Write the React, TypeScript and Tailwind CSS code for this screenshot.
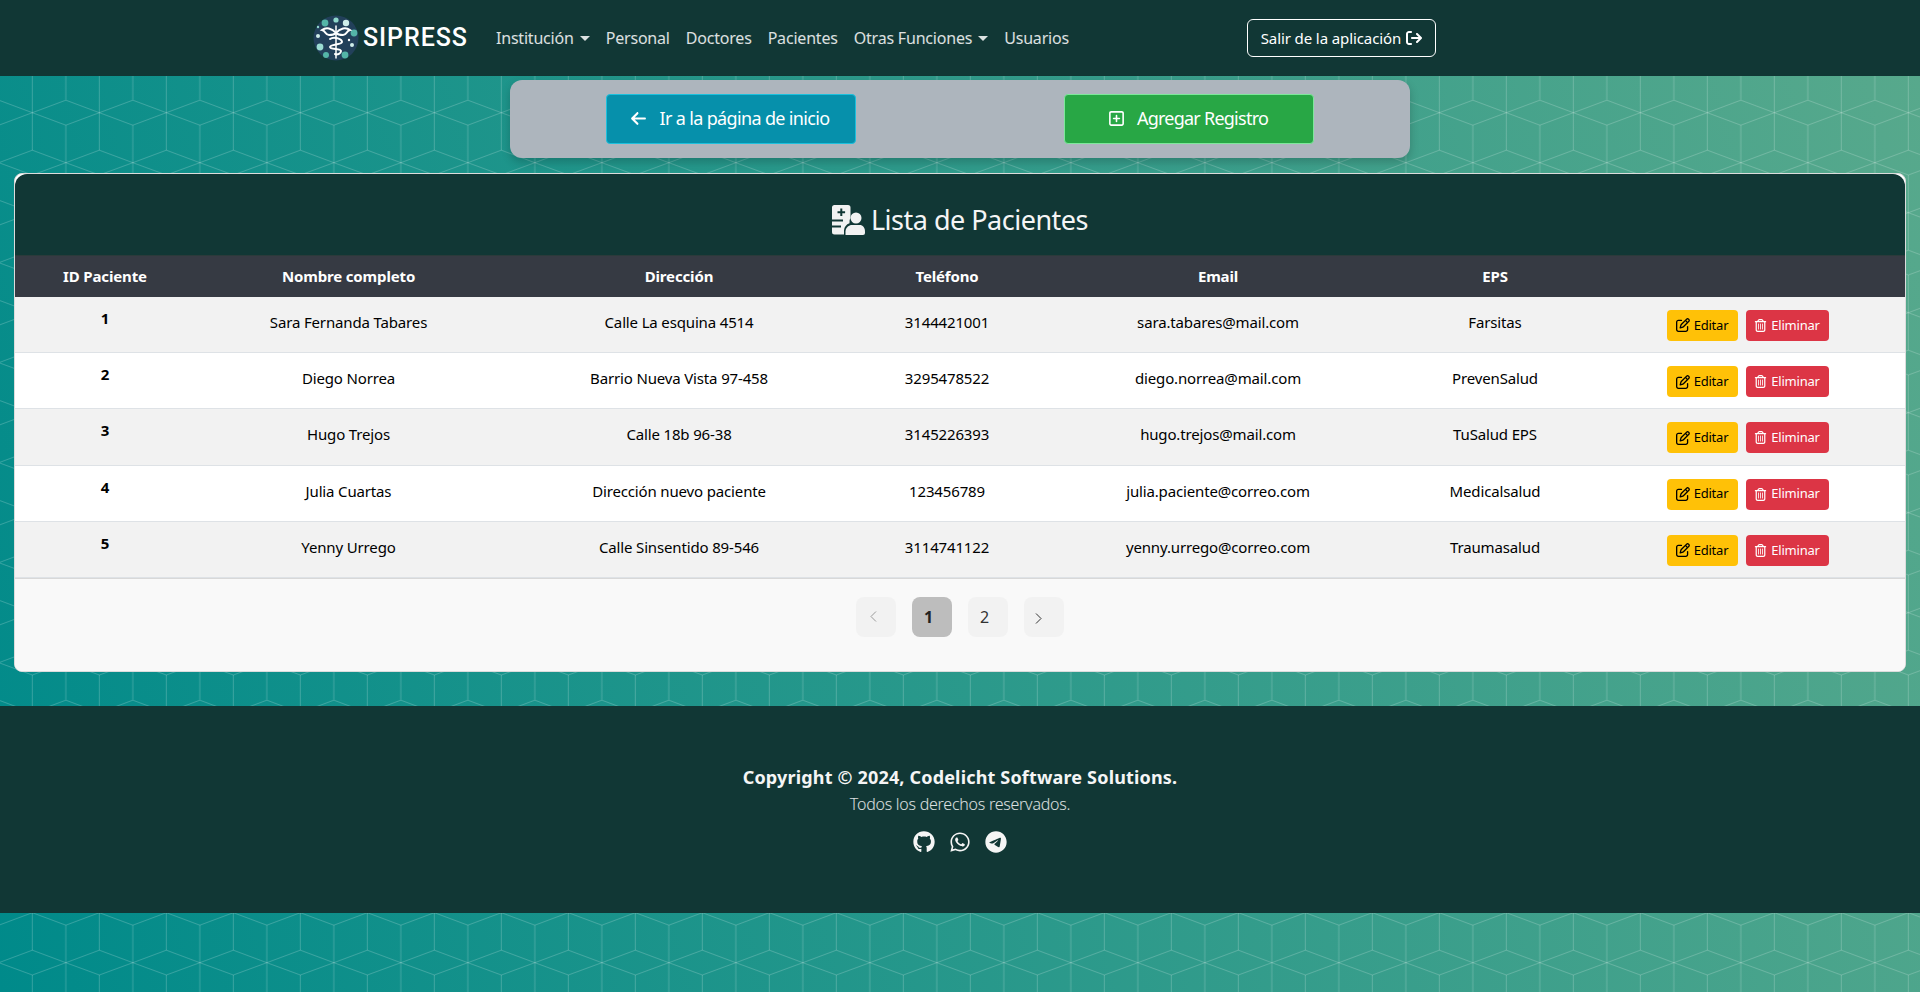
import React from "react";
import {
  FaArrowLeft,
  FaArrowRightFromBracket,
  FaGithub,
  FaRegPenToSquare,
  FaRegSquarePlus,
  FaRegTrashCan,
  FaTelegram,
  FaWhatsapp,
} from "react-icons/fa6";

interface Patient {
  id: number;
  name: string;
  address: string;
  phone: string;
  email: string;
  eps: string;
}

const PATIENTS: Patient[] = [
  { id: 1, name: "Sara Fernanda Tabares", address: "Calle La esquina 4514", phone: "3144421001", email: "sara.tabares@mail.com", eps: "Farsitas" },
  { id: 2, name: "Diego Norrea", address: "Barrio Nueva Vista 97-458", phone: "3295478522", email: "diego.norrea@mail.com", eps: "PrevenSalud" },
  { id: 3, name: "Hugo Trejos", address: "Calle 18b 96-38", phone: "3145226393", email: "hugo.trejos@mail.com", eps: "TuSalud EPS" },
  { id: 4, name: "Julia Cuartas", address: "Dirección nuevo paciente", phone: "123456789", email: "julia.paciente@correo.com", eps: "Medicalsalud" },
  { id: 5, name: "Yenny Urrego", address: "Calle Sinsentido 89-546", phone: "3114741122", email: "yenny.urrego@correo.com", eps: "Traumasalud" },
];

const NAV_ITEMS = [
  { label: "Institución", caret: true },
  { label: "Personal", caret: false },
  { label: "Doctores", caret: false },
  { label: "Pacientes", caret: false },
  { label: "Otras Funciones", caret: true },
  { label: "Usuarios", caret: false },
];

const BlocksBackground = () => (
  <svg className="absolute inset-0 h-full w-full" aria-hidden="true">
    <defs>
      <pattern id="blocks" x="-1.17" y="0" width="67" height="100" patternUnits="userSpaceOnUse">
        <path
          d="M33.5 50.2 67 62.7 33.5 75 0 62.7ZM0 .2 33.5 12.7 0 25.2M67 .2 33.5 12.7 67 25.2M33.5 0V50.2M33.5 75V100M0 25.2V100M67 25.2V100"
          fill="none"
          stroke="#fff"
          strokeOpacity="0.2"
          strokeWidth="1"
        />
      </pattern>
    </defs>
    <rect width="100%" height="100%" fill="url(#blocks)" />
  </svg>
);

const Logo = () => (
  <svg width="46" height="46" viewBox="0 0 46 46" aria-hidden="true">
    <circle cx="23" cy="23" r="22.5" fill="#22405a" />
    <circle cx="23" cy="5" r="2.600" fill="#8fd8cc" />
    <circle cx="12" cy="8" r="3.400" fill="#54b5a8" />
    <circle cx="33" cy="8" r="3.200" fill="#cfeee9" />
    <circle cx="41" cy="18" r="3.400" fill="#54b5a8" />
    <circle cx="5" cy="21" r="2" fill="#cfeee9" />
    <circle cx="7" cy="32" r="3.400" fill="#9adcd2" />
    <circle cx="13" cy="40" r="3" fill="#54b5a8" />
    <circle cx="32" cy="40" r="3.400" fill="#54b5a8" />
    <circle cx="39" cy="30" r="2" fill="#cfeee9" />
    <circle cx="5" cy="12" r="1.200" fill="#8fd8cc" />
    <circle cx="36" cy="25" r="1.200" fill="#fff" />
    <g fill="none" stroke="#fff" strokeWidth="2" strokeLinecap="round">
      <path d="M23 11V43" strokeWidth="1.500" />
      <path d="M23 18C19 13 13 12 9 15 13 16 12 20 16 20 19 20 21 20 23 18" />
      <path d="M23 18C27 13 33 12 37 15 33 16 34 20 30 20 27 20 25 20 23 18" />
      <path d="M17 24C21 21 29 24 29 27 29 30 17 29 17 32 17 35 28 33 28 36 28 39 24 40 22 39" />
    </g>
  </svg>
);

const PatientIcon = () => (
  <svg width="33" height="30" viewBox="0 0 33 30" fill="#f2f2f2" aria-hidden="true">
    <path
      fillRule="evenodd"
      d="M2.5 0H16a2.5 2.5 0 0 1 2.5 2.5V13a6.500 6.500 0 0 0-1 5.200 8.500 8.500 0 0 0-5.500 7V29.500H2.500A2.500 2.500 0 0 1 0 27V2.500A2.500 2.500 0 0 1 2.500 0ZM8.300 3.500V6.300H5.500V8.300H8.300V11.100H10.300V8.300H13.100V6.300H10.300V3.500ZM0 14.500V16.500H11V14.500ZM0 20.500V22.500H9V20.500Z"
    />
    <circle cx="24" cy="13" r="5.500" />
    <path d="M13.500 30V26.500C13.500 22.500 17 20 20 20H28C30.500 20 33 22.500 33 26.500V28A2 2 0 0 1 31 30Z" />
  </svg>
);

const Caret = () => (
  <span className="ml-[6px] inline-block h-0 w-0 border-x-[5px] border-t-[5px] border-x-transparent border-t-white/85 align-[3px]" />
);

const Chevron = ({ left, className }: { left?: boolean; className: string }) => (
  <svg width="7" height="11" viewBox="0 0 7 11" fill="none" stroke="currentColor" strokeWidth="1" className={className} aria-hidden="true">
    <path d={left ? "M6 .5 1 5.500 6 10.500" : "M1 .5 6 5.500 1 10.500"} />
  </svg>
);

const PageButton = ({ children, active, muted }: { children: React.ReactNode; active?: boolean; muted?: boolean }) => (
  <button
    className={`flex h-10 w-10 items-center justify-center rounded-lg text-[16px] ${
      active ? "bg-[#bdbdbd] font-bold text-[#222]" : muted ? "bg-[#f2f2f2] text-[#999]" : "bg-[#f2f2f2] text-[#333]"
    }`}
  >
    {children}
  </button>
);

const App: React.FC = () => {
  return (
    <div className="relative h-[992px] overflow-hidden bg-[linear-gradient(75deg,#008a8a,#58a98c)] font-['Noto_Sans',sans-serif] text-black">
      <BlocksBackground />
      <div className="relative">
        <nav className="h-[76px] bg-[#113735]">
          <div className="mx-auto flex h-full w-[1320px] items-center pl-[13px]">
            <a className="flex items-center">
              <Logo />
              <span className="ml-[4px] font-['Roboto',sans-serif] text-[25px] font-medium tracking-[0.95px] text-white">SIPRESS</span>
            </a>
            <ul className="ml-[28px] flex gap-[16px] text-[16px] tracking-[-0.2px] text-white/85">
              {NAV_ITEMS.map((item) => (
                <li key={item.label} className="whitespace-nowrap">
                  {item.label}
                  {item.caret && <Caret />}
                </li>
              ))}
            </ul>
            <button className="ml-[178px] flex h-[38px] w-[189px] items-center justify-center gap-[5px] rounded-md border border-white text-[15px] tracking-[-0.1px] text-white">
              Salir de la aplicación
              <FaArrowRightFromBracket className="text-[16px]" />
            </button>
          </div>
        </nav>

        <div className="mx-auto mt-1 flex h-[78px] w-[900px] items-center justify-between rounded-xl bg-[#adb5bd] px-[96px] shadow-[0_4px_10px_rgba(0,0,0,0.2)]">
          <button className="flex h-[50px] w-[250px] items-center justify-center gap-[12px] rounded-[4px] border border-[#1cc0dd] bg-[#0690ab] pr-[2px] pb-[2px] text-[18px] tracking-[-0.65px] text-white">
            <FaArrowLeft className="text-[17px]" />
            Ir a la página de inicio
          </button>
          <button className="flex h-[50px] w-[250px] items-center justify-center gap-[12px] rounded-[4px] border border-[#7de89a] bg-[#28a745] pr-[2px] pb-[2px] text-[18px] tracking-[-0.75px] text-white">
            <FaRegSquarePlus className="text-[17px]" />
            Agregar Registro
          </button>
        </div>

        <section className="mx-[14px] mt-[15px] h-[499px] overflow-hidden rounded-lg border border-[#dcdcdc] bg-white">
          <header className="flex h-[81px] items-center justify-center gap-[6px] rounded-t-[12px] bg-[#113735] pt-[11px] text-white">
            <PatientIcon />
            <h1 className="text-[27px] tracking-[-0.5px] text-[#f5f5f5]">Lista de Pacientes</h1>
          </header>

          <table className="w-full table-fixed border-collapse text-[15px] tracking-[-0.15px]">
            <colgroup>
              <col className="w-[180px]" />
              <col className="w-[307px]" />
              <col className="w-[354px]" />
              <col className="w-[182px]" />
              <col className="w-[360px]" />
              <col className="w-[194px]" />
              <col />
            </colgroup>
            <thead className="bg-[#363a43] text-white">
              <tr className="h-[41px] border-t border-[#2b3a3a]">
                <th>ID Paciente</th>
                <th>Nombre completo</th>
                <th>Dirección</th>
                <th>Teléfono</th>
                <th>Email</th>
                <th>EPS</th>
                <th></th>
              </tr>
            </thead>
            <tbody>
              {PATIENTS.map((p, i) => (
                <tr key={p.id} className={`h-[56.2px] border-b border-[#dee2e6] ${i % 2 === 0 ? "bg-[#f2f2f2]" : "bg-white"}`}>
                  <td className="pt-[10px] text-center align-top font-bold">{p.id}</td>
                  <td className="pt-[14px] text-center align-top">{p.name}</td>
                  <td className="pt-[14px] text-center align-top">{p.address}</td>
                  <td className="pt-[14px] text-center align-top">{p.phone}</td>
                  <td className="pt-[14px] text-center align-top">{p.email}</td>
                  <td className="pt-[14px] text-center align-top">{p.eps}</td>
                  <td className="pt-[2px] pr-[2px] align-middle">
                    <div className="flex justify-center gap-2">
                      <button className="flex h-[31px] w-[71px] items-center justify-center gap-[4px] rounded-[4px] bg-[#ffc107] text-[13px] tracking-[-0.2px] text-black">
                        <FaRegPenToSquare className="text-[14px]" />
                        Editar
                      </button>
                      <button className="flex h-[31px] w-[83px] items-center justify-center gap-[4px] rounded-[4px] bg-[#dc3545] text-[13px] tracking-[-0.2px] text-white">
                        <FaRegTrashCan className="text-[13px]" />
                        Eliminar
                      </button>
                    </div>
                  </td>
                </tr>
              ))}
            </tbody>
          </table>

          <div className="flex h-[93px] justify-center gap-4 border-t border-[#d8d8d8] bg-[#f9f9f9] pt-[18px]">
            <PageButton muted>
              <Chevron left className="mr-[5px]" />
            </PageButton>
            <PageButton active>
              <span className="pr-[7px]">1</span>
            </PageButton>
            <PageButton>
              <span className="pr-[7px]">2</span>
            </PageButton>
            <PageButton>
              <Chevron className="mt-[3px] mr-[11px]" />
            </PageButton>
          </div>
        </section>

        <footer className="mt-[34px] flex h-[207px] flex-col items-center bg-[#113735] pt-[58px] text-white">
          <p className="text-[18px] font-bold tracking-[0.17px] text-[#f5f5f5]">Copyright © 2024, Codelicht Software Solutions.</p>
          <p className="mt-[1px] text-[16px] font-light tracking-[-0.25px] text-white/85">Todos los derechos reservados.</p>
          <div className="mt-[15px] flex items-center gap-[14px] text-[22px] text-[#f5f5f5]">
            <FaGithub />
            <FaWhatsapp />
            <FaTelegram />
          </div>
        </footer>
      </div>
    </div>
  );
};

export default App;
